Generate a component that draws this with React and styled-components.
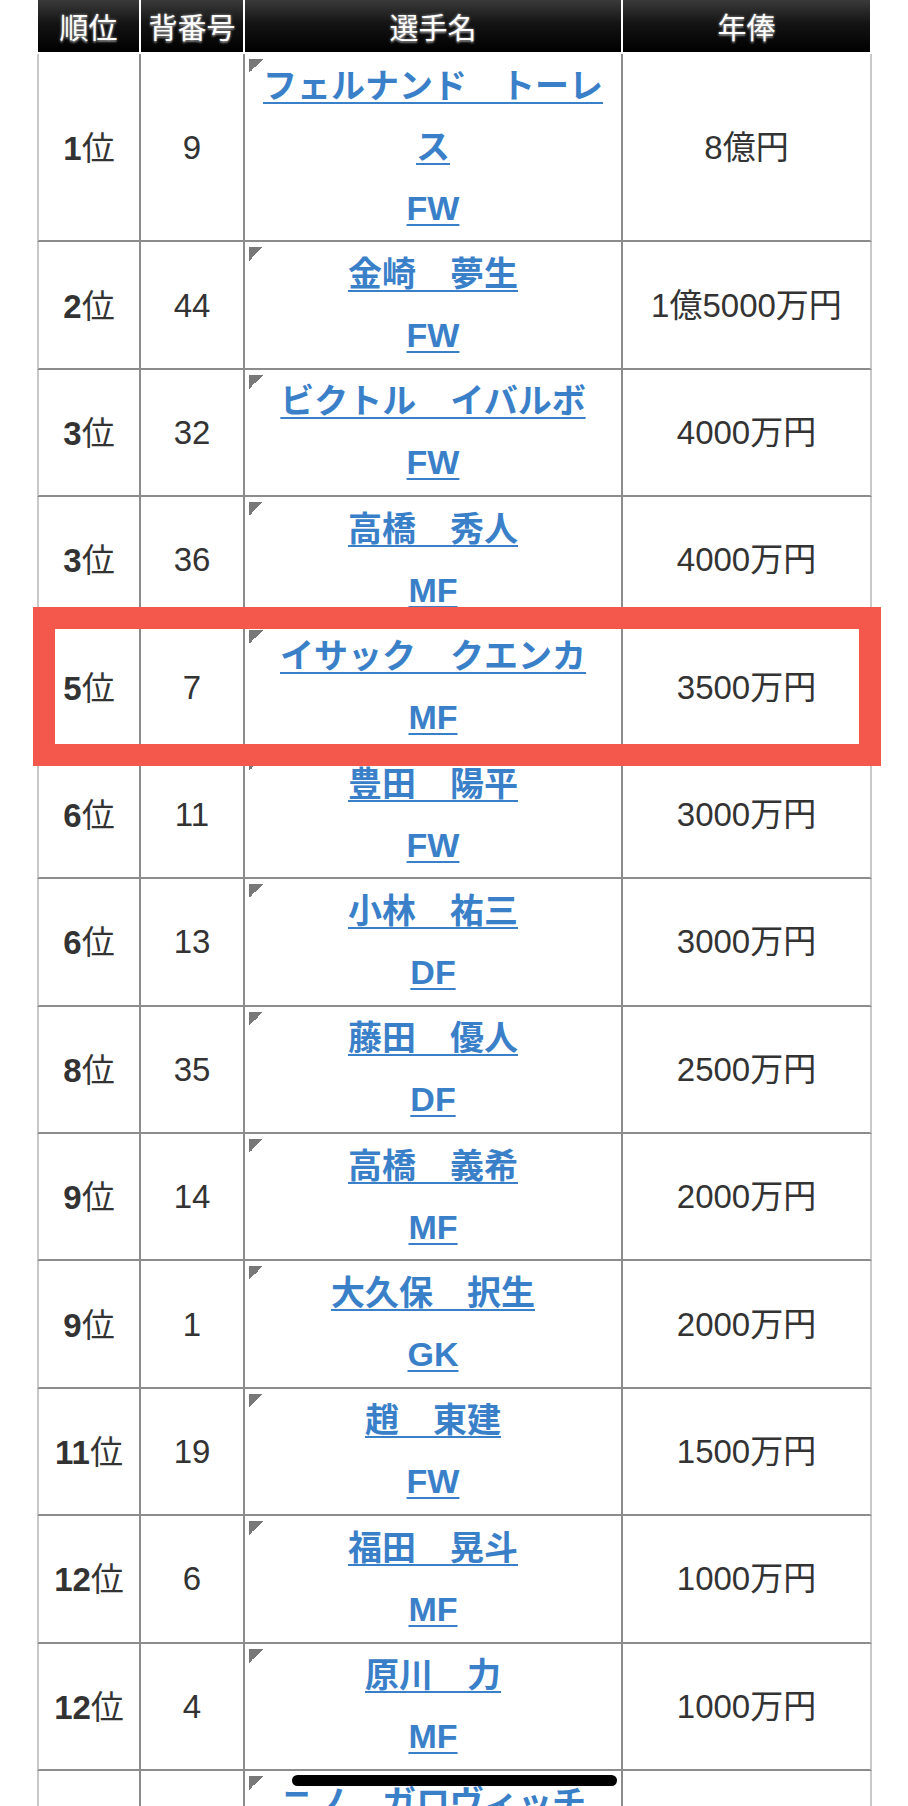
import React from "react";
import styled, { createGlobalStyle } from "styled-components";

const GlobalStyle = createGlobalStyle`
  html, body {
    margin: 0;
    padding: 0;
    background: #ffffff;
  }
  body {
    font-family: "Liberation Sans", "Noto Sans CJK JP", sans-serif;
    color: #333333;
  }
`;

const Screen = styled.div`
  position: relative;
  width: 908px;
  height: 1806px;
  overflow: hidden;
  background: #ffffff;
`;

const Table = styled.table`
  width: 835px;
  margin: 0 0 0 37px;
  table-layout: fixed;
  border-collapse: separate;
  border-spacing: 0;
`;

const Th = styled.th`
  height: 52px;
  padding: 0;
  background: linear-gradient(to bottom, #3a3a3a 0%, #141414 45%, #000000 100%);
  color: #ffffff;
  font-family: "Noto Sans CJK JP", sans-serif;
  font-size: 29px;
  font-weight: normal;
  line-height: 52px;
  text-align: center;
  text-shadow: 0 0 3px rgba(255, 255, 255, 0.55), 0 2px 2px rgba(120, 120, 120, 0.9);
  border-right: 2px solid #ffffff;
  border-bottom: 2px solid #ffffff;
  &:first-child {
    border-left: 1px solid #ffffff;
  }
`;

const Td = styled.td`
  padding: 1.7px 8px;
  line-height: 61px;
  font-size: 33px;
  text-align: center;
  vertical-align: middle;
  color: #333333;
  border-bottom: 2px solid #8c8c8c;
  border-right: 2px solid ${(p) => (p.$last ? "#c8c8c8" : "#8c8c8c")};
  border-left: ${(p) => (p.$first ? "2px solid #c8c8c8" : "none")};
  word-break: break-all;
`;

const NameTd = styled(Td)`
  background-image: linear-gradient(135deg, #787878 50%, transparent 50%);
  background-repeat: no-repeat;
  background-size: 14px 14px;
  background-position: 4px 5px;
`;

const Rank = styled.b`
  font-weight: bold;
`;

const RankUnit = styled.span`
  font-family: "Noto Sans CJK JP", sans-serif;
  font-weight: normal;
`;

const PlayerLink = styled.a`
  color: #3a80c9;
  font-weight: bold;
  font-size: 34px;
  text-decoration: underline;
  text-decoration-thickness: 2px;
  text-underline-offset: 4px;
  cursor: pointer;
`;

const Highlight = styled.div`
  position: absolute;
  left: 33px;
  top: 607px;
  width: 848px;
  height: 159px;
  box-sizing: border-box;
  border: 22px solid #f4574b;
  pointer-events: none;
`;

const HomeBar = styled.div`
  position: absolute;
  left: 292px;
  top: 1775px;
  width: 325px;
  height: 11px;
  border-radius: 6px;
  background: #000000;
`;

const rows = [
  ["1", "9", "フェルナンド　トーレス", "FW", "8億円"],
  ["2", "44", "金崎　夢生", "FW", "1億5000万円"],
  ["3", "32", "ビクトル　イバルボ", "FW", "4000万円"],
  ["3", "36", "高橋　秀人", "MF", "4000万円"],
  ["5", "7", "イサック　クエンカ", "MF", "3500万円"],
  ["6", "11", "豊田　陽平", "FW", "3000万円"],
  ["6", "13", "小林　祐三", "DF", "3000万円"],
  ["8", "35", "藤田　優人", "DF", "2500万円"],
  ["9", "14", "高橋　義希", "MF", "2000万円"],
  ["9", "1", "大久保　択生", "GK", "2000万円"],
  ["11", "19", "趙　東建", "FW", "1500万円"],
  ["12", "6", "福田　晃斗", "MF", "1000万円"],
  ["12", "4", "原川　力", "MF", "1000万円"],
  ["", "", "ニノ　ガロヴィッチ", "DF", ""],
];

export default function App() {
  return (
    <Screen>
      <GlobalStyle />
      <Table>
        <colgroup>
          <col style={{ width: 104 }} />
          <col style={{ width: 104 }} />
          <col style={{ width: 378 }} />
          <col style={{ width: 249 }} />
        </colgroup>
        <thead>
          <tr>
            <Th>順位</Th>
            <Th>背番号</Th>
            <Th>選手名</Th>
            <Th>年俸</Th>
          </tr>
        </thead>
        <tbody>
          {rows.map(([rank, num, name, pos, pay], i) => (
            <tr key={i}>
              <Td $first>
                {rank && (
                  <>
                    <Rank>{rank}</Rank>
                    <RankUnit>位</RankUnit>
                  </>
                )}
              </Td>
              <Td>{num}</Td>
              <NameTd>
                <PlayerLink>{name}</PlayerLink>
                <br />
                <PlayerLink>{pos}</PlayerLink>
              </NameTd>
              <Td $last>{pay}</Td>
            </tr>
          ))}
        </tbody>
      </Table>
      <Highlight />
      <HomeBar />
    </Screen>
  );
}
